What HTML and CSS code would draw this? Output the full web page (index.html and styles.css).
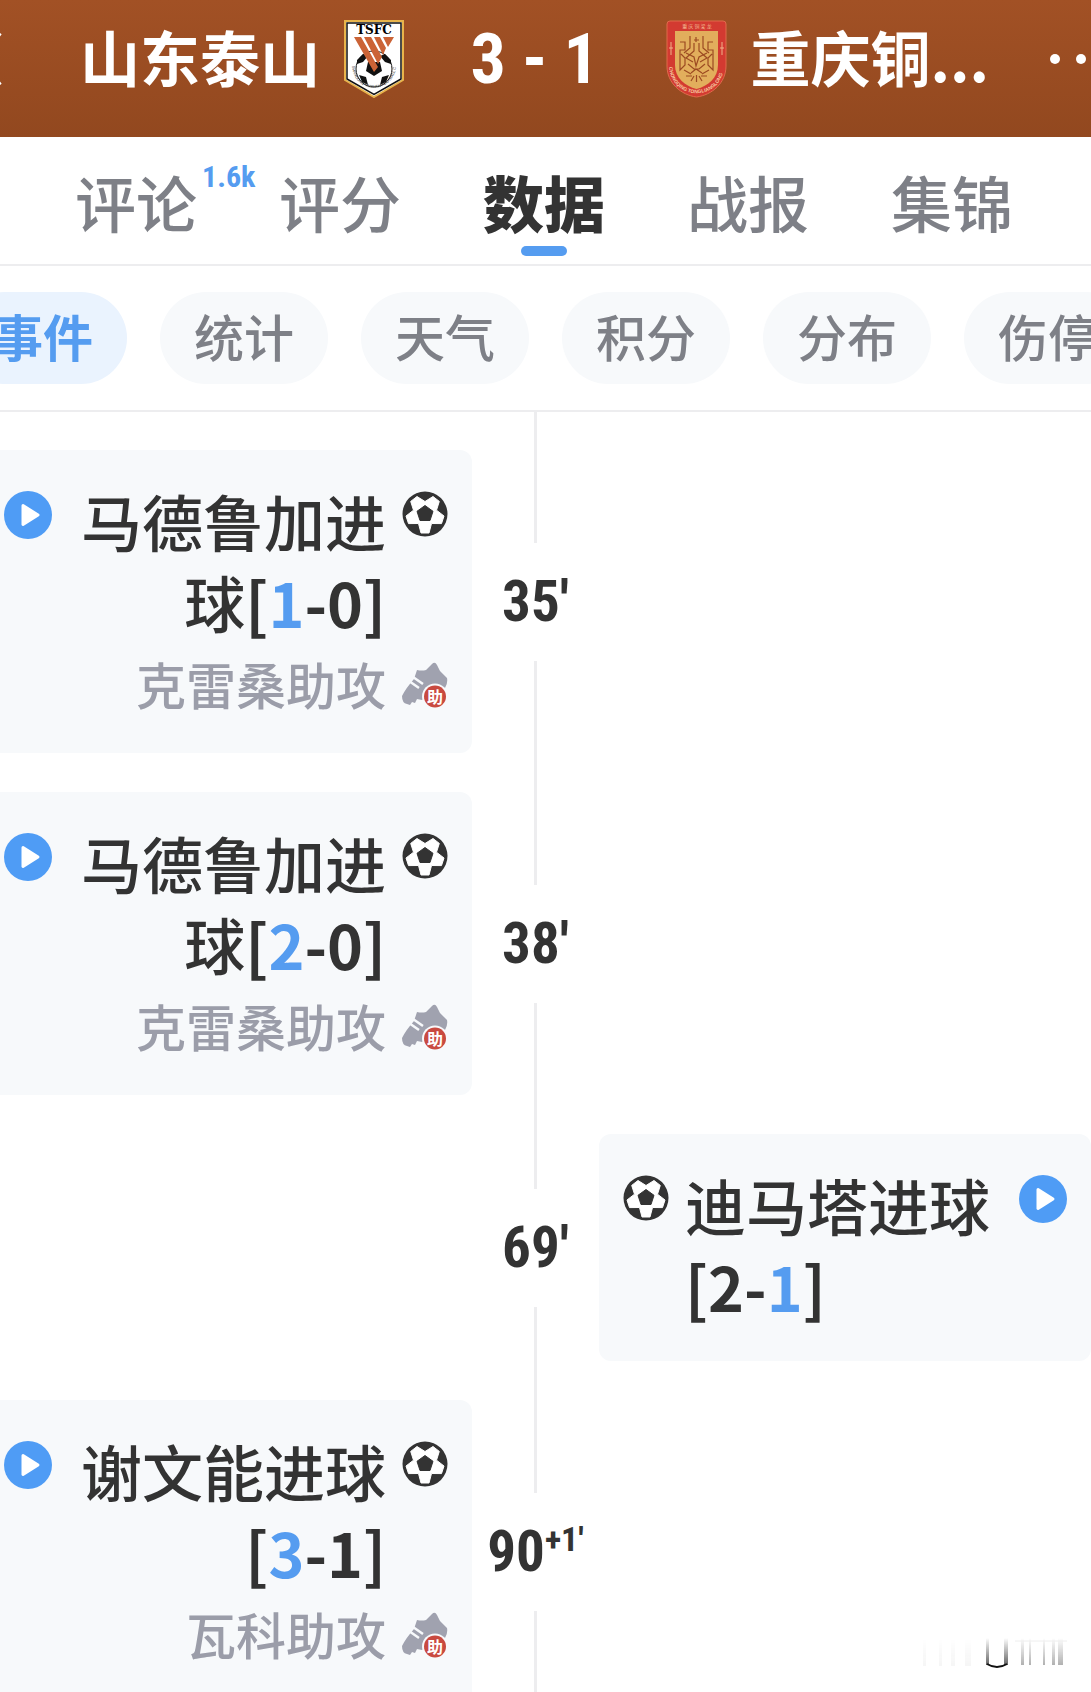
FILE: index.html
```html
<!DOCTYPE html>
<html lang="zh-CN">
<head>
  <meta charset="UTF-8">
  <meta name="viewport" content="width=device-width, initial-scale=1">
  <title>山东泰山 3 - 1 重庆铜梁龙</title>
  <link rel="stylesheet" href="styles.css">
</head>
<body>
  <!-- Icônes réutilisées -->
  <svg width="0" height="0" class="defs" aria-hidden="true">
    <symbol id="ball" viewBox="-23 -23 46 46">
      <circle r="22.5" fill="#333"/>
      <path fill="#fff" stroke="#fff" stroke-width="1" stroke-linejoin="round" d="M4 19H-4L-6.500 9.500-16.500 9.600-19 2-11.500-3.800-14.300-12.600-8-17.500 0-12.500 8-17.500 14.300-12.600 11.500-3.800 19 2 16.500 9.600 6.500 9.500Z"/>
      <path fill="#333" stroke="#333" stroke-linejoin="round" d="M0-8.500 8-2.700 5 6.500H-5L-8-2.700Z"/>
    </symbol>
    <symbol id="play" viewBox="0 0 48 48">
      <circle cx="24" cy="24" r="24" fill="#4f9cf5"/>
      <path d="M19 14.500 34 24 19 33.500Z" fill="#fff" stroke="#fff" stroke-width="3" stroke-linejoin="round"/>
    </symbol>
    <symbol id="boot" viewBox="0 0 46 46">
      <path fill="#a0a2af" d="M15 8Q20 9 24 8L30 2Q33-1 35 3L38 9 45 16Q46 21 43 26L31 31 20 38 15 37 13 41 10 40 8 43 5 42Q0 41 0 34 4 26 12 17Z"/>
      <path stroke="#f7f9fb" stroke-width="2.500" fill="none" d="M7 19 17 26M11 15 21 22"/>
      <circle cx="33" cy="34.500" r="13" fill="#f7f9fb"/>
      <circle cx="33" cy="34.500" r="11" fill="#c94a40"/>
      <text x="33" y="40.500" text-anchor="middle" class="boot-text">助</text>
    </symbol>
  </svg>

  <div class="app">
    <header class="scorebar">
      <button class="back" aria-label="返回">
        <svg width="24" height="60" viewBox="0 0 24 60"><path d="M22 4 4 30 22 56" fill="none" stroke="#fff" stroke-width="4"/></svg>
      </button>
      <div class="team">
        <span>山东泰山</span>
        <svg class="crest" width="60" height="78" viewBox="0 0 60 78">
          <path d="M1 1H59V60L30 77 1 60Z" fill="#fff" stroke="#e8b44c" stroke-width="2"/>
          <path d="M3 3H57V59L30 74.500 3 59Z" fill="#fff" stroke="#111" stroke-width="1.500"/>
          <text x="30" y="14" text-anchor="middle" class="crest-title">TSFC</text>
          <circle cx="30" cy="49" r="18" fill="#fff" stroke="#111"/>
          <path fill="#111" d="M24 42 36 42 38 51 30 56 22 51ZM13 40 19 34 24 36 19 42 13 44ZM47 40 41 34 36 36 41 42 47 44ZM15 55 22 57 24 65 18 62ZM45 55 38 57 36 65 42 62Z"/>
          <path fill="#cb6336" d="M10 17H17L34 47 30 52ZM20 17H27L38 37 34 44ZM30 17H36L42 28 39 35ZM39 17H50L44 27Z"/>
          <path id="arcA" d="M8 46C10 75 50 75 52 46" fill="none"/>
          <text class="crest-arc"><textPath href="#arcA">SHANDONG TAISHAN FOOTBALL CLUB</textPath></text>
        </svg>
      </div>
      <div class="score">3 - 1</div>
      <div class="team away">
        <svg class="crest" width="61" height="78" viewBox="0 0 61 78">
          <path d="M4 1H57Q60 1 60 4V46C60 63 46 75 30.500 77 15 75 1 63 1 46V4Q1 1 4 1Z" fill="#d33a31" stroke="#e06a4b"/>
          <path d="M9 11H52V45C52 58 42 66 30.500 69 19 66 9 58 9 45Z" fill="#e2ae5c"/>
          <text x="31" y="8" text-anchor="middle" class="crest-cn">重 庆 铜 梁 龙</text>
          <g fill="none" stroke="#9c4a22" stroke-width="1.200">
            <path d="M14 22H19V30H14V50L19 45V38L15 34M47 22H42V30H47V50L42 45V38L46 34"/>
            <path d="M24 16V28L18 33M37 16V28L43 33M28 23V31L20 38 27 42M33 23V31L41 38 34 42"/>
            <path d="M20 33 28 37 30 46 33 37 41 33M22 44 28 49H33L39 44M25 53 30 49 36 53"/>
            <path d="M18 50 25 54M20 56 26 56M25 61 28 56M30.500 62V55M36 61 33 56M41 56 35 56M43 50 36 54M30 17V22M28 20H33"/>
          </g>
          <path d="M5 22V35M3 28H7M56 22V35M54 28H58" stroke="#f0b28a"/>
          <path id="arcB" d="M3 47C6 82 55 82 58 47" fill="none"/>
          <text class="crest-arc light"><textPath href="#arcB">CHONGQING TONGLIANGLONG</textPath></text>
        </svg>
        <span>重庆铜...</span>
      </div>
      <button class="more" aria-label="更多">
        <svg width="62" height="12" viewBox="0 0 62 12" fill="#fff"><circle cx="6" cy="6" r="5"/><circle cx="32" cy="6" r="5"/><circle cx="58" cy="6" r="5"/></svg>
      </button>
    </header>

    <nav class="tabs">
      <a href="#comments">评论<sup class="count">1.6k</sup></a>
      <a href="#ratings">评分</a>
      <a href="#data" class="active">数据</a>
      <a href="#report">战报</a>
      <a href="#highlights">集锦</a>
    </nav>

    <div class="pills">
      <button class="pill active">事件</button>
      <button class="pill">统计</button>
      <button class="pill">天气</button>
      <button class="pill">积分</button>
      <button class="pill">分布</button>
      <button class="pill">伤停</button>
    </div>

    <main class="timeline">
      <div class="row">
        <article class="card home">
          <button class="play" aria-label="播放"><svg width="48" height="48"><use href="#play"/></svg></button>
          <div class="goal">马德鲁加进球<b>[<em>1</em>-0]</b></div>
          <svg class="ball" width="46" height="46"><use href="#ball"/></svg>
          <div class="assist">克雷桑助攻</div>
          <svg class="boot" width="46" height="46"><use href="#boot"/></svg>
        </article>
        <div class="minute">35′</div>
      </div>
      <div class="row">
        <article class="card home">
          <button class="play" aria-label="播放"><svg width="48" height="48"><use href="#play"/></svg></button>
          <div class="goal">马德鲁加进球<b>[<em>2</em>-0]</b></div>
          <svg class="ball" width="46" height="46"><use href="#ball"/></svg>
          <div class="assist">克雷桑助攻</div>
          <svg class="boot" width="46" height="46"><use href="#boot"/></svg>
        </article>
        <div class="minute">38′</div>
      </div>
      <div class="row">
        <div class="minute">69′</div>
        <article class="card guest">
          <svg class="ball" width="46" height="46"><use href="#ball"/></svg>
          <div class="goal">迪马塔进球<b>[2-<em>1</em>]</b></div>
          <button class="play" aria-label="播放"><svg width="48" height="48"><use href="#play"/></svg></button>
        </article>
      </div>
      <div class="row">
        <article class="card home">
          <button class="play" aria-label="播放"><svg width="48" height="48"><use href="#play"/></svg></button>
          <div class="goal">谢文能进球<b>[<em>3</em>-1]</b></div>
          <svg class="ball" width="46" height="46"><use href="#ball"/></svg>
          <div class="assist">瓦科助攻</div>
          <svg class="boot" width="46" height="46"><use href="#boot"/></svg>
        </article>
        <div class="minute">90<sup>+1′</sup></div>
      </div>
    </main>
  </div>

  <!-- filigrane -->
  <svg class="watermark" width="150" height="36" viewBox="0 0 150 36" aria-hidden="true">
    <defs>
      <linearGradient id="fade" x1="0" y1="0" x2="0" y2="1"><stop offset="0" stop-color="#222" stop-opacity="0"/><stop offset="1" stop-color="#222" stop-opacity=".7"/></linearGradient>
    </defs>
    <g fill="url(#fade)">
      <rect x="67" y="2" width="3" height="27"/><rect x="85" y="2" width="4" height="27"/>
      <g opacity=".5"><rect x="102" y="2" width="3" height="27"/><rect x="110" y="2" width="2" height="27"/><rect x="124" y="2" width="2" height="27"/><rect x="133" y="2" width="3" height="27"/><rect x="139" y="2" width="5" height="27"/></g>
      <g opacity=".06"><rect x="4" y="2" width="3" height="28"/><rect x="20" y="2" width="3" height="28"/><rect x="32" y="2" width="4" height="28"/><rect x="46" y="2" width="6" height="28"/></g>
    </g>
    <path d="M68 28Q78 34 88 28" fill="none" stroke="#111" stroke-width="2"/>
    <path d="M96 5H148" stroke="#eee" stroke-width="1"/>
  </svg>
</body>
</html>
```
FILE: styles.css
```css
:root {
  --blue: #559cf0;
  --ink: #333;
  --grey: #7e8087;
  --soft: #f7f9fb;
  --line: #ededef;
  --cn: "Noto Sans CJK SC", sans-serif;
  --num: "Roboto Condensed", Roboto, "Noto Sans CJK SC", sans-serif;
}
* {box-sizing:border-box;margin:0;padding:0;}
body {background:#fff;color:var(--ink);font-family:var(--cn);overflow:hidden;}
button {border:none;background:none;font-family:inherit;cursor:pointer;}
a {color:inherit;text-decoration:none;}
svg {display:block;flex:none;}
.defs {position:absolute;}
.app {display:flex;flex-direction:column;height:100vh;overflow:hidden;}

/* Barre du score */
.scorebar {display:flex;align-items:center;height:137px;padding-bottom:19px;flex:none;overflow:hidden;background:linear-gradient(#a25125,#92481f);color:#fff;}
.back {width:24px;margin-left:-22px;flex:none;}
.team {display:flex;align-items:center;gap:24px;margin-left:78px;font-size:60px;font-weight:700;white-space:nowrap;}
.team span {line-height:80px;padding-bottom:6px;}
.away {margin-left:0;}
.score {flex:1;text-align:center;font-family:var(--num);font-size:70px;line-height:80px;font-weight:700;}
.more {width:42px;margin-left:60px;flex:none;}
.crest-title {font:700 12px "DejaVu Serif",serif;}
.crest-arc {font:4px "Liberation Sans",sans-serif;fill:#333;}
.crest-arc.light {font-size:5px;font-weight:700;fill:#f6c9a0;}
.crest-cn {font:5px var(--cn);fill:#f0b28a;}

/* Onglets */
.tabs {display:flex;flex:none;height:129px;padding:0 37px 0 34px;border-bottom:2px solid var(--line);}
.tabs a {flex:1;position:relative;text-align:center;font-size:61px;line-height:130px;font-weight:500;color:var(--grey);}
.tabs .active {color:var(--ink);font-weight:900;}
.tabs .active::after {content:"";position:absolute;left:50%;bottom:8px;width:46px;height:10px;margin-left:-23px;border-radius:5px;background:var(--blue);}
.count {position:absolute;left:168px;top:20px;font-family:var(--num);font-size:30px;line-height:40px;font-weight:700;color:var(--blue);}

.pills {display:flex;flex:none;gap:33px;padding:26px 0;margin-left:-41px;border-bottom:2px solid var(--line);overflow:hidden;}
.pill {flex:none;height:92px;padding:0 34px 6px;border-radius:46px;background:var(--soft);color:var(--grey);font-size:50px;line-height:86px;font-weight:500;}
.pill.active {background:#eaf3fe;color:var(--blue);font-weight:700;}

/* Chronologie */
.timeline {flex:1;display:flex;flex-direction:column;gap:39px;min-height:0;padding-top:38px;margin-left:-20px;overflow:hidden;background:linear-gradient(var(--line),var(--line)) center/3px 100% no-repeat;}
.row {display:grid;grid-template-columns:1fr 127px 1fr;align-items:center;flex:none;}
.card {display:grid;column-gap:16px;padding:30px 24px 35px;border-radius:12px;background:var(--soft);}
.home {grid-template-columns:48px 1fr 46px;text-align:right;}
.guest {grid-template-columns:46px 1fr 48px;grid-column:3;}
.goal {font-size:61px;line-height:81px;font-weight:500;padding-left:10px;}
.guest .goal {padding:0 10px 0 0;}
.goal b {font-weight:700;white-space:nowrap;}
.goal em {font-style:normal;color:var(--blue);}
.play,.ball {margin-top:11px;align-self:start;}
.assist {grid-column:2;margin-top:6px;font-size:50px;line-height:70px;font-weight:500;color:#9b9da9;}
.boot {align-self:center;margin-top:10px;}
.boot-text {font:700 16px var(--cn);fill:#fff;}
.minute {grid-column:2;height:118px;background:#fff;text-align:center;font-family:var(--num);font-size:57px;line-height:118px;font-weight:700;white-space:nowrap;}
.minute sup {font-size:34px;line-height:0;}

.watermark {position:fixed;right:22px;bottom:20px;}
```
